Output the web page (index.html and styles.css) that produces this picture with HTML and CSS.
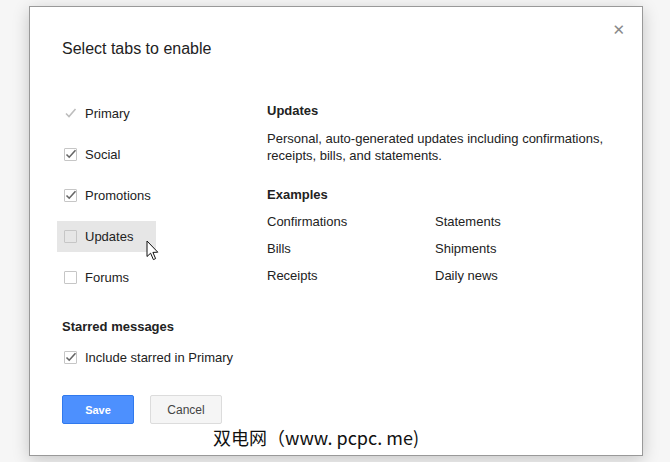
FILE: index.html
```html
<!DOCTYPE html>
<html lang="en">

<head>
    <meta charset="UTF-8">
    <title>Select tabs to enable</title>
    <link rel="stylesheet" href="styles.css">
</head>

<body>
    <div class="dialog">
        <button class="close-button" aria-label="Close">&#x2715;</button>
        <h1 class="dialog-title">Select tabs to enable</h1>

        <div class="dialog-body">
            <!-- Tab list -->
            <div class="tab-list">
                <div class="tab-row">
                    <span class="check check-disabled">
                        <svg width="13" height="13" viewBox="0 0 13 13"><path d="M2 6.5 L5 9.5 L11.5 2" fill="none" stroke="#bdbdbd" stroke-width="1.6"/></svg>
                    </span>
                    <span>Primary</span>
                </div>
                <div class="tab-row">
                    <span class="check">
                        <svg width="13" height="13" viewBox="0 0 13 13"><path d="M2.5 6.5 L5.2 9.2 L11.5 2.2" fill="none" stroke="#666" stroke-width="1.6"/></svg>
                    </span>
                    <span>Social</span>
                </div>
                <div class="tab-row">
                    <span class="check">
                        <svg width="13" height="13" viewBox="0 0 13 13"><path d="M2.5 6.5 L5.2 9.2 L11.5 2.2" fill="none" stroke="#666" stroke-width="1.6"/></svg>
                    </span>
                    <span>Promotions</span>
                </div>
                <div class="tab-row tab-row-hover">
                    <span class="check"></span>
                    <span>Updates</span>
                    <svg class="cursor" width="14" height="22" viewBox="0 0 14 22">
                        <path d="M1 1 L1 16.5 L4.6 13.2 L7.4 19.6 L9.6 18.6 L6.9 12.4 L11.8 12.2 Z" fill="#fff" stroke="#111" stroke-width="1"/>
                    </svg>
                </div>
                <div class="tab-row">
                    <span class="check"></span>
                    <span>Forums</span>
                </div>

                <h2 class="section-title starred-title">Starred messages</h2>
                <div class="tab-row">
                    <span class="check">
                        <svg width="13" height="13" viewBox="0 0 13 13"><path d="M2.5 6.5 L5.2 9.2 L11.5 2.2" fill="none" stroke="#666" stroke-width="1.6"/></svg>
                    </span>
                    <span>Include starred in Primary</span>
                </div>
            </div>

            <!-- Tab description -->
            <div class="tab-info">
                <h2 class="section-title">Updates</h2>
                <p class="tab-desc">Personal, auto-generated updates including confirmations, receipts, bills, and statements.</p>
                <h2 class="section-title">Examples</h2>
                <div class="examples">
                    <span>Confirmations</span>
                    <span>Statements</span>
                    <span>Bills</span>
                    <span>Shipments</span>
                    <span>Receipts</span>
                    <span>Daily news</span>
                </div>
            </div>
        </div>

        <div class="dialog-footer">
            <button class="btn btn-save">Save</button>
            <button class="btn btn-cancel">Cancel</button>
        </div>

        <div class="watermark">双电网（www. pcpc. me)</div>
    </div>
</body>

</html>
```

FILE: styles.css
```css
:root {
    --text-primary: #222;
    --border-color: #999;
    --check-border: #c6c6c6;
    --hover-bg: #e6e6e6;
    --blue: #4d90fe;
    --blue-border: #3079ed;
}

* {
    box-sizing: border-box;
}

body {
    margin: 0;
    width: 670px;
    height: 462px;
    background: #f6f6f6;
    font-family: Arial, "Liberation Sans", sans-serif;
    font-size: 13px;
    color: var(--text-primary);
    overflow: hidden;
}

.dialog {
    position: relative;
    width: 614px;
    height: 450px;
    margin: 6px 0 0 29px;
    padding: 32px 32px 0;
    background: #fff;
    border: 1px solid var(--border-color);
    box-shadow: 0 4px 16px rgba(0, 0, 0, 0.2);
}

.close-button {
    position: absolute;
    top: 14px;
    right: 17px;
    border: none;
    background: none;
    padding: 0;
    color: #8a8a8a;
    font-size: 15px;
    font-weight: bold;
    font-family: "DejaVu Sans", sans-serif;
    cursor: pointer;
}

.dialog-title {
    margin: 0;
    font-size: 16px;
    font-weight: normal;
    line-height: 20px;
}

.dialog-body {
    display: flex;
    margin-top: 39px;
}

.tab-list {
    width: 205px;
    display: flex;
    flex-direction: column;
    align-items: flex-start;
    gap: 10px;
}

.tab-row {
    position: relative;
    display: flex;
    align-items: center;
    gap: 8px;
    height: 31px;
    width: 99px;
    margin-left: -5px;
    padding-left: 7px;
    line-height: 17px;
    white-space: nowrap;
}

.tab-row-hover {
    background: var(--hover-bg);
}

.check {
    display: inline-flex;
    flex: none;
    width: 13px;
    height: 13px;
    border: 1px solid var(--check-border);
    border-radius: 1px;
    background: #fff;
}

.check svg {
    margin: -1px;
}

.check-disabled {
    border-color: transparent;
    background: transparent;
}

.tab-row-hover .check {
    background: transparent;
}

.cursor {
    position: absolute;
    left: 89px;
    top: 19px;
}

.section-title {
    margin: 0;
    font-size: 13px;
    font-weight: bold;
    line-height: 17px;
}

.starred-title {
    margin-top: 15px;
    margin-bottom: -3px;
}

.tab-info {
    padding-top: 4px;
}

.tab-desc {
    margin: 11px 0 22px;
    width: 340px;
    line-height: 17px;
}

.examples {
    display: grid;
    grid-template-columns: 168px 168px;
    row-gap: 10px;
    margin-top: 10px;
    line-height: 17px;
}

.dialog-footer {
    display: flex;
    gap: 16px;
    margin-top: 22px;
}

.btn {
    width: 72px;
    height: 29px;
    border-radius: 2px;
    font-family: Arial, "Liberation Sans", sans-serif;
    font-size: 11px;
    cursor: pointer;
}

.btn-save {
    background: var(--blue);
    border: 1px solid var(--blue-border);
    color: #fff;
    font-weight: bold;
}

.btn-cancel {
    background: #f5f5f5;
    border: 1px solid #dcdcdc;
    color: #444;
    font-size: 12px;
}

.watermark {
    position: absolute;
    left: 183px;
    top: 418px;
    font-family: "Noto Sans CJK SC", sans-serif;
    font-size: 18px;
    line-height: 24px;
    color: #111;
    white-space: nowrap;
}
```
